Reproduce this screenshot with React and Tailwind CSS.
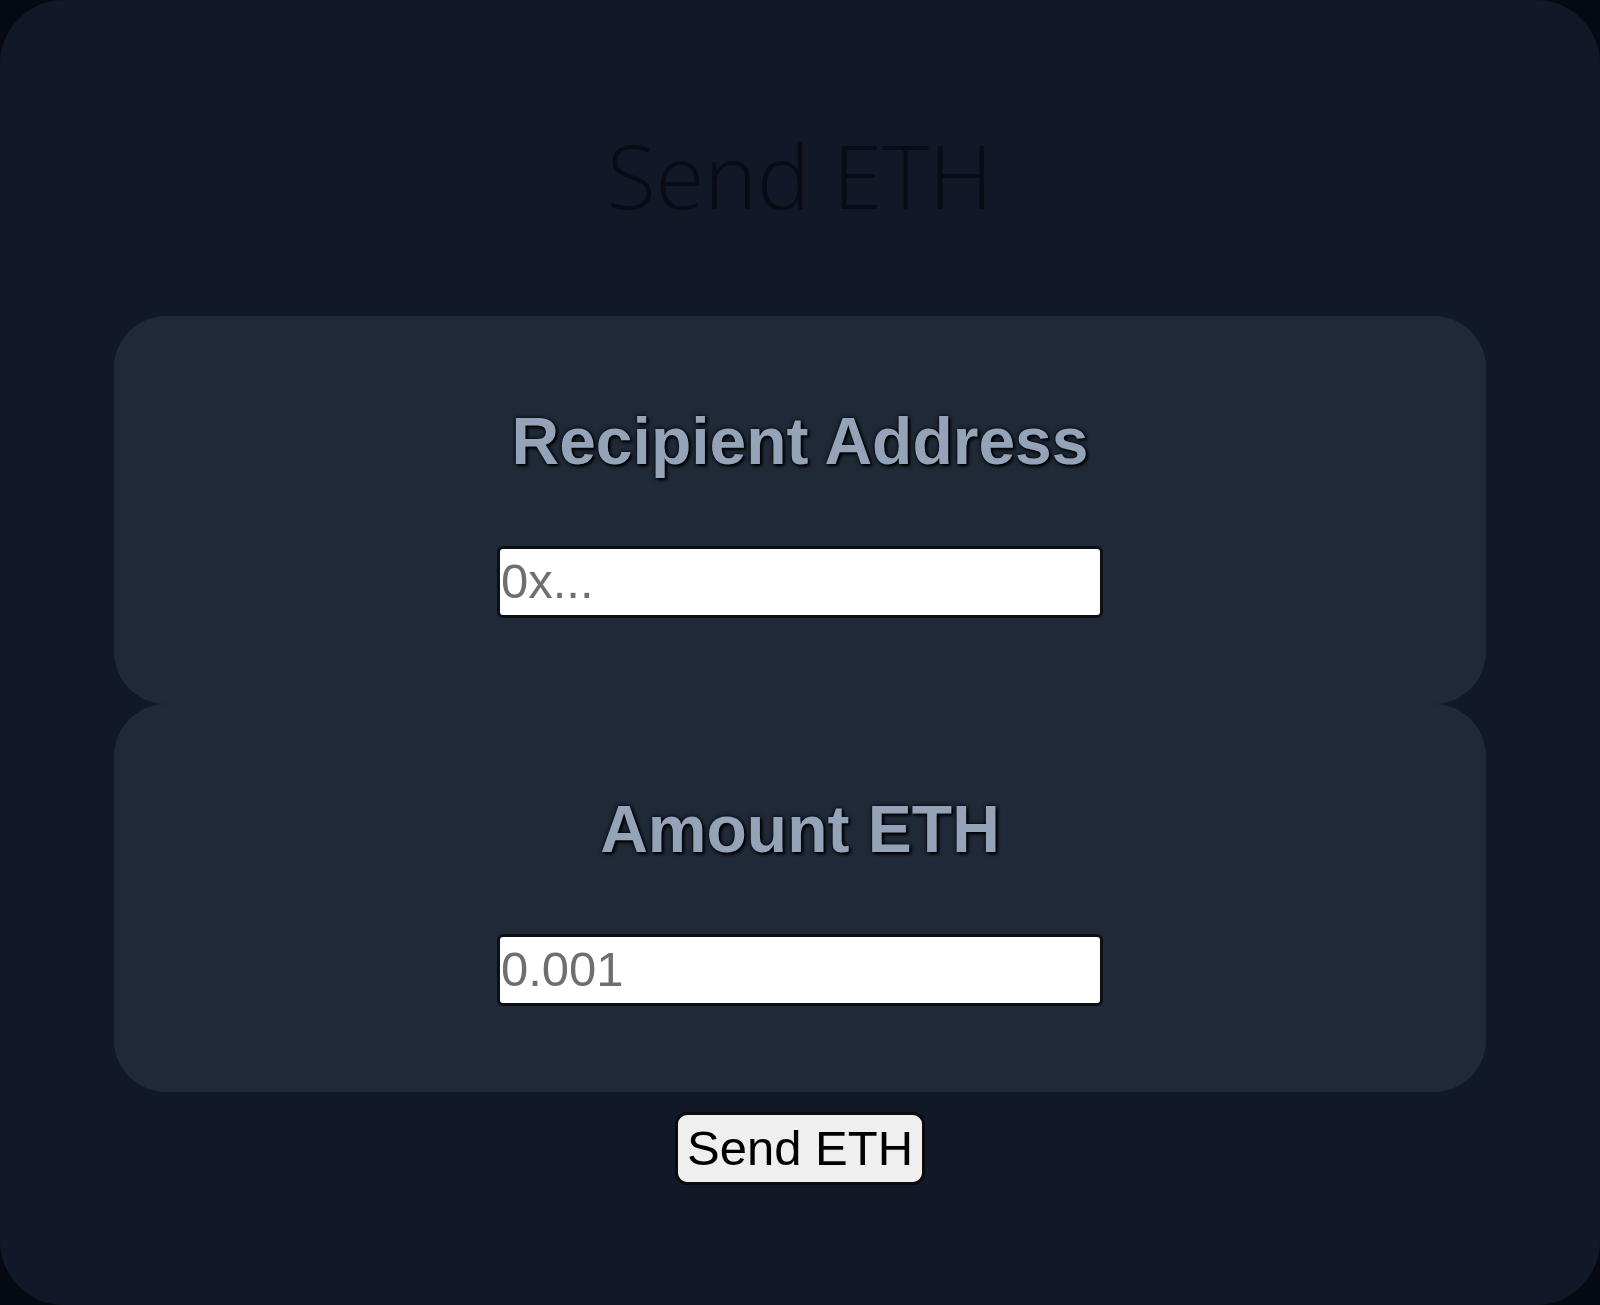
import React, { useState } from "react";

export default function App() {
  const [recipient, setRecipient] = useState("");
  const [amount, setAmount] = useState("");

  return (
    <div className="min-h-[1305px] bg-[#060a12]">
      <div className="h-[1305px] rounded-[64px] bg-[#111827] flex flex-col items-center">
        {/* Title */}
        <h1 className="mt-[130px] text-[89px] leading-none font-light text-[#090c14] font-['Open_Sans','Noto_Sans',sans-serif]">
          Send ETH
        </h1>

        {/* Form panels */}
        <div className="mt-[97px] w-[1372px] flex flex-col">
          <Field
            label="Recipient Address"
            placeholder="0x..."
            value={recipient}
            onChange={setRecipient}
          />
          <Field
            label="Amount ETH"
            placeholder="0.001"
            value={amount}
            onChange={setAmount}
          />
        </div>

        <button className="mt-[20px] h-[73px] px-[9px] rounded-[12px] bg-[#efefef] border-[3px] border-[#0b0b0b] text-black text-[49px] leading-none font-['Liberation_Sans',Arial,sans-serif]">
          Send ETH
        </button>
      </div>
    </div>
  );
}

const Field = ({ label, placeholder, value, onChange }) => (
  <div className="h-[388px] rounded-[52px] bg-[#1f2937] flex flex-col items-center pt-[92px]">
    <h3 className="text-[66px] leading-none font-bold text-[#94a3b8] font-['Liberation_Sans',Arial,sans-serif] [text-shadow:0_0_4px_#000,2px_2px_3px_#000]">
      {label}
    </h3>
    <input
      value={value}
      onChange={(e) => onChange(e.target.value)}
      placeholder={placeholder}
      className="mt-[72px] w-[606px] h-[72px] px-[1px] bg-white border-[3px] border-[#0d0f14] rounded-[6px] text-[49px] text-[#333] placeholder:text-[#6f6f6f] font-['Liberation_Sans',Arial,sans-serif] outline-none"
    />
  </div>
);
